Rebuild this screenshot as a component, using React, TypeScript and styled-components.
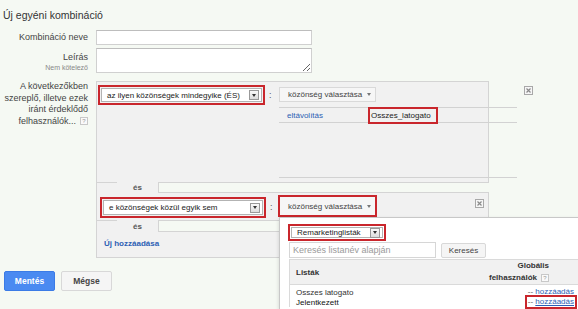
import React from 'react';
import styled, { createGlobalStyle } from 'styled-components';

const RED = '#c9262c';
const BORDER = '#d4d4d4';
const PANEL = '#f1f1f1';
const PAGE = '#f5f9f3';
const LINK = '#2d5fb4';

const GlobalStyle = createGlobalStyle`
  html, body { margin: 0; padding: 0; overflow: hidden; }
  body {
    width: 578px;
    height: 309px;
    background: ${PAGE};
    font-family: "Liberation Sans", Arial, sans-serif;
    color: #333;
  }
  * { box-sizing: border-box; }
`;

const Page = styled.div`
  padding-top: 8px;
`;

const Title = styled.h1`
  margin: 0 0 0 3px;
  font-size: 10.5px;
  font-weight: normal;
  line-height: 14px;
  color: #333;
`;

const FieldRow = styled.div<{ $mt: number; $align?: string }>`
  display: flex;
  gap: 8px;
  margin-top: ${p => p.$mt}px;
  align-items: ${p => p.$align || 'flex-start'};
`;

const Label = styled.div<{ $pt?: number; $lh?: number }>`
  width: 88px;
  flex: none;
  text-align: right;
  font-size: 9px;
  line-height: ${p => p.$lh || 11}px;
  padding-top: ${p => p.$pt || 0}px;
  color: #444;
  white-space: nowrap;
`;

const SubLabel = styled.div`
  font-size: 7px;
  line-height: 10px;
  color: #888;
`;

const TextInput = styled.input`
  width: 216px;
  height: 15px;
  border: 1px solid #d0d0d0;
  border-top-color: #bdbdbd;
  background: #fff;
  padding: 0 3px;
  margin: 0;
  font-size: 9px;
`;

const TextArea = styled.textarea`
  width: 216px;
  height: 25px;
  border: 1px solid #d0d0d0;
  border-top-color: #bdbdbd;
  background: #fff;
  padding: 0 3px;
  margin: 0;
  font-size: 9px;
  display: block;
`;

const Help = styled.span`
  display: inline-block;
  width: 8px;
  height: 8px;
  border: 1px solid #c8c8c8;
  background: #fafafa;
  color: #999;
  font-size: 6px;
  line-height: 6px;
  text-align: center;
  vertical-align: middle;
  margin-left: 4px;
  font-weight: normal;
`;

const Combination = styled.div`
  width: 393px;
  font-size: 8px;
  color: #333;
`;

const Block = styled.div<{ $h: number; $top?: boolean; $bottom?: boolean; $pl: number; $pt: number }>`
  position: relative;
  display: flex;
  align-items: flex-start;
  height: ${p => p.$h}px;
  background: ${PANEL};
  border-left: 1px solid ${BORDER};
  border-right: 1px solid ${BORDER};
  border-top: ${p => (p.$top ? `1px solid ${BORDER}` : 'none')};
  border-bottom: ${p => (p.$bottom ? `1px solid ${BORDER}` : 'none')};
  padding: ${p => p.$pt}px 0 0 ${p => p.$pl}px;
`;

const SelectFrame = styled.div<{ $w: number; $h: number }>`
  width: ${p => p.$w}px;
  height: ${p => p.$h}px;
  border: 2px solid ${RED};
  padding: 1px;
  flex: none;
`;

const Select = styled.div`
  width: 100%;
  height: 100%;
  display: flex;
  align-items: center;
  background: #fff;
  border: 1px solid #b3b3b3;
  padding-left: 5px;
  font-size: 8px;
  color: #222;
  white-space: nowrap;
`;

const Arrow = styled.span`
  margin-left: auto;
  margin-right: 2px;
  width: 10px;
  height: 10px;
  border: 1px solid #999;
  background: linear-gradient(#fafafa, #dcdcdc);
  display: flex;
  align-items: center;
  justify-content: center;
  &::after {
    content: '';
    border-left: 2.5px solid transparent;
    border-right: 2.5px solid transparent;
    border-top: 3px solid #333;
  }
`;

const Colon = styled.span<{ $w: number }>`
  width: ${p => p.$w}px;
  flex: none;
  padding-left: 4px;
  line-height: 20px;
  font-size: 9px;
  color: #555;
`;

const RightCol = styled.div`
  width: 238px;
  flex: none;
  margin-top: 2px;
`;

const AudienceButton = styled.div`
  display: inline-flex;
  align-items: center;
  height: 15px;
  width: 97px;
  padding-left: 8px;
  background: #f6f6f6;
  border: 1px solid #d9d9d9;
  font-size: 8px;
  color: #444;
  white-space: nowrap;
  &::after {
    content: '';
    margin-left: 5px;
    border-left: 2.5px solid transparent;
    border-right: 2.5px solid transparent;
    border-top: 3px solid #777;
  }
`;

const ButtonFrame = styled.div`
  border: 2px solid ${RED};
  margin-top: -2px;
  height: 22px;
  flex: none;
  display: flex;
  & > div {
    height: 18px;
    width: 95px;
    border: none;
  }
`;

const AudienceList = styled.div`
  margin-top: 5px;
  border-top: 1px solid #d2d2d2;
`;

const AudienceRow = styled.div`
  display: flex;
  align-items: center;
  height: 15px;
  border-bottom: 1px solid #d2d2d2;
`;

const RemoveLink = styled.a`
  width: 91px;
  padding-left: 8px;
  color: ${LINK};
  font-size: 8px;
  text-decoration: none;
`;

const Chosen = styled.span`
  display: inline-block;
  line-height: 13px;
  padding: 0 5px 0 1px;
  outline: 2px solid ${RED};
  color: #222;
  font-size: 8px;
`;

const EmptyArea = styled.div`
  height: 55px;
  border-bottom: 1px solid #d2d2d2;
`;

const CloseIcon = styled.svg<{ $left: number; $top: number }>`
  position: absolute;
  left: ${p => p.$left}px;
  top: ${p => p.$top}px;
`;

const Connector = styled.div<{ $h: number }>`
  display: flex;
  height: ${p => p.$h}px;
`;

const ConnLeft = styled.div`
  width: 21px;
  background: ${PANEL};
  border-left: 1px solid ${BORDER};
  border-top: 1px solid ${BORDER};
`;

const ConnTab = styled.div`
  width: 41px;
  background: ${PANEL};
  text-align: center;
  font-weight: bold;
  color: #555;
  font-size: 8px;
  display: flex;
  align-items: center;
  justify-content: center;
`;

const ConnRight = styled.div`
  flex: 1;
  background: ${PAGE};
  border-left: 1px solid ${BORDER};
  border-top: 1px solid ${BORDER};
  border-bottom: 1px solid ${BORDER};
`;

const AddLink = styled.a`
  color: ${LINK};
  font-weight: bold;
  font-size: 8px;
  line-height: 12px;
  text-decoration: none;
`;

const Popup = styled.div`
  position: absolute;
  left: 182px;
  top: 24px;
  width: 302px;
  height: 92px;
  background: #fff;
  border-left: 1px solid #c8c8c8;
  border-top: 1px solid #c8c8c8;
  box-shadow: 0 2px 4px rgba(0, 0, 0, 0.15);
  padding: 6px 0 0 8px;
  z-index: 2;
  overflow: hidden;
`;

const SearchRow = styled.div`
  display: flex;
  gap: 5px;
  margin: 1px 0 0 1px;
  height: 16px;
`;

const SearchInput = styled.div`
  width: 147px;
  height: 16px;
  border: 1px solid #d6d6d6;
  background: #fff;
  color: #9a9a9a;
  font-size: 9px;
  line-height: 14px;
  padding-left: 3px;
  white-space: nowrap;
`;

const PlainButton = styled.button<{ $w: number; $h: number; $bold?: boolean }>`
  width: ${p => p.$w}px;
  height: ${p => p.$h}px;
  background: #f5f5f5;
  border: 1px solid #d8d8d8;
  border-radius: 2px;
  color: #444;
  font-family: "Liberation Sans", Arial, sans-serif;
  font-size: ${p => (p.$bold ? 8.5 : 8)}px;
  font-weight: ${p => (p.$bold ? 'bold' : 'normal')};
  padding: 0;
  margin: 0;
`;

const SearchButton = styled(PlainButton)`
  margin-top: 1px;
  height: 15px;
`;

const Table = styled.div`
  margin: 1px 0 0 1px;
  width: 291px;
  border-top: 1px solid #dadada;
  border-left: 1px solid #dadada;
`;

const TableHead = styled.div`
  display: flex;
  justify-content: space-between;
  align-items: center;
  height: 25px;
  background: ${PANEL};
  border-bottom: 1px solid #dadada;
  font-weight: bold;
  font-size: 8px;
  color: #333;
  padding: 0 31px 0 6px;
`;

const HeadRight = styled.div`
  text-align: right;
  line-height: 12px;
`;

const TableBody = styled.div`
  padding: 2px 5px 0 6px;
`;

const TableRow = styled.div<{ $strong?: boolean }>`
  display: flex;
  justify-content: space-between;
  align-items: center;
  height: 10px;
  font-size: 8px;
  color: ${p => (p.$strong ? '#111' : '#333')};
`;

const AddAction = styled.span<{ $marked?: boolean }>`
  display: inline-block;
  line-height: 10px;
  padding: 0 1px;
  color: #555;
  outline: ${p => (p.$marked ? `2px solid ${RED}` : 'none')};
  & a {
    color: ${LINK};
    text-decoration: underline;
  }
`;

const Actions = styled.div`
  display: flex;
  gap: 6px;
  margin: 13px 0 0 4px;
`;

const PrimaryButton = styled.button`
  width: 51px;
  height: 20px;
  background: #4a8af1;
  border: 1px solid #3b7be6;
  border-radius: 2px;
  color: #fff;
  font-family: "Liberation Sans", Arial, sans-serif;
  font-size: 8.5px;
  font-weight: bold;
  padding: 0;
  margin: 0;
`;

const Close = ({ left, top }: { left: number; top: number }) => (
  <CloseIcon $left={left} $top={top} width="9" height="9" viewBox="0 0 9 9">
    <rect x="0.5" y="0.5" width="8" height="8" fill="#f6f6f6" stroke="#a8a8a8" />
    <path d="M2.5 2.5 L6.5 6.5 M6.5 2.5 L2.5 6.5" stroke="#8a8a8a" strokeWidth="1.2" />
  </CloseIcon>
);

export default function App() {
  return (
    <>
      <GlobalStyle />
      <Page>
        <Title>Új egyéni kombináció</Title>

        <FieldRow $mt={8} $align="center">
          <Label>Kombináció neve</Label>
          <TextInput type="text" />
        </FieldRow>

        <FieldRow $mt={3}>
          <Label $pt={4}>
            Leírás
            <SubLabel>Nem kötelező</SubLabel>
          </Label>
          <TextArea />
        </FieldRow>

        <FieldRow $mt={8}>
          <Label $lh={11.5}>
            A következőkben
            <br />
            szereplő, illetve ezek
            <br />
            iránt érdeklődő
            <br />
            felhasználók...
            <Help>?</Help>
          </Label>

          <Combination>
            <Block $h={101} $top $pl={1} $pt={3}>
              <SelectFrame $w={167} $h={20}>
                <Select>
                  az ilyen közönségek mindegyike (ÉS)
                  <Arrow />
                </Select>
              </SelectFrame>
              <Colon $w={14}>:</Colon>
              <RightCol>
                <AudienceButton>közönség választása</AudienceButton>
                <AudienceList>
                  <AudienceRow>
                    <RemoveLink>eltávolítás</RemoveLink>
                    <Chosen>Osszes_latogato</Chosen>
                  </AudienceRow>
                  <EmptyArea />
                </AudienceList>
              </RightCol>
              <Close left={427} top={4} />
            </Block>

            <Connector $h={11}>
              <ConnLeft />
              <ConnTab>és</ConnTab>
              <ConnRight />
            </Connector>

            <Block $h={27} $pl={3} $pt={4}>
              <SelectFrame $w={166} $h={21}>
                <Select>
                  e közönségek közül egyik sem
                  <Arrow />
                </Select>
              </SelectFrame>
              <Colon $w={12}>:</Colon>
              <ButtonFrame>
                <AudienceButton>közönség választása</AudienceButton>
              </ButtonFrame>
              <Close left={378} top={6} />

              <Popup>
                <SelectFrame $w={98} $h={17}>
                  <Select>
                    Remarketinglisták
                    <Arrow />
                  </Select>
                </SelectFrame>
                <SearchRow>
                  <SearchInput>Keresés listanév alapján</SearchInput>
                  <SearchButton $w={45} $h={15}>Keresés</SearchButton>
                </SearchRow>
                <Table>
                  <TableHead>
                    <span>Listák</span>
                    <HeadRight>
                      Globális
                      <br />
                      felhasználók
                      <Help>?</Help>
                    </HeadRight>
                  </TableHead>
                  <TableBody>
                    <TableRow>
                      <span>Osszes latogato</span>
                      <AddAction>
                        -- <a>hozzáadás</a>
                      </AddAction>
                    </TableRow>
                    <TableRow $strong>
                      <span>Jelentkezett</span>
                      <AddAction $marked>
                        -- <a>hozzáadás</a>
                      </AddAction>
                    </TableRow>
                  </TableBody>
                </Table>
              </Popup>
            </Block>

            <Connector $h={12}>
              <ConnLeft />
              <ConnTab>és</ConnTab>
              <ConnRight />
            </Connector>

            <Block $h={26} $bottom $pl={7} $pt={6}>
              <AddLink>Új hozzáadása</AddLink>
            </Block>
          </Combination>
        </FieldRow>

        <Actions>
          <PrimaryButton>Mentés</PrimaryButton>
          <PlainButton $w={51} $h={20} $bold>
            Mégse
          </PlainButton>
        </Actions>
      </Page>
    </>
  );
}
